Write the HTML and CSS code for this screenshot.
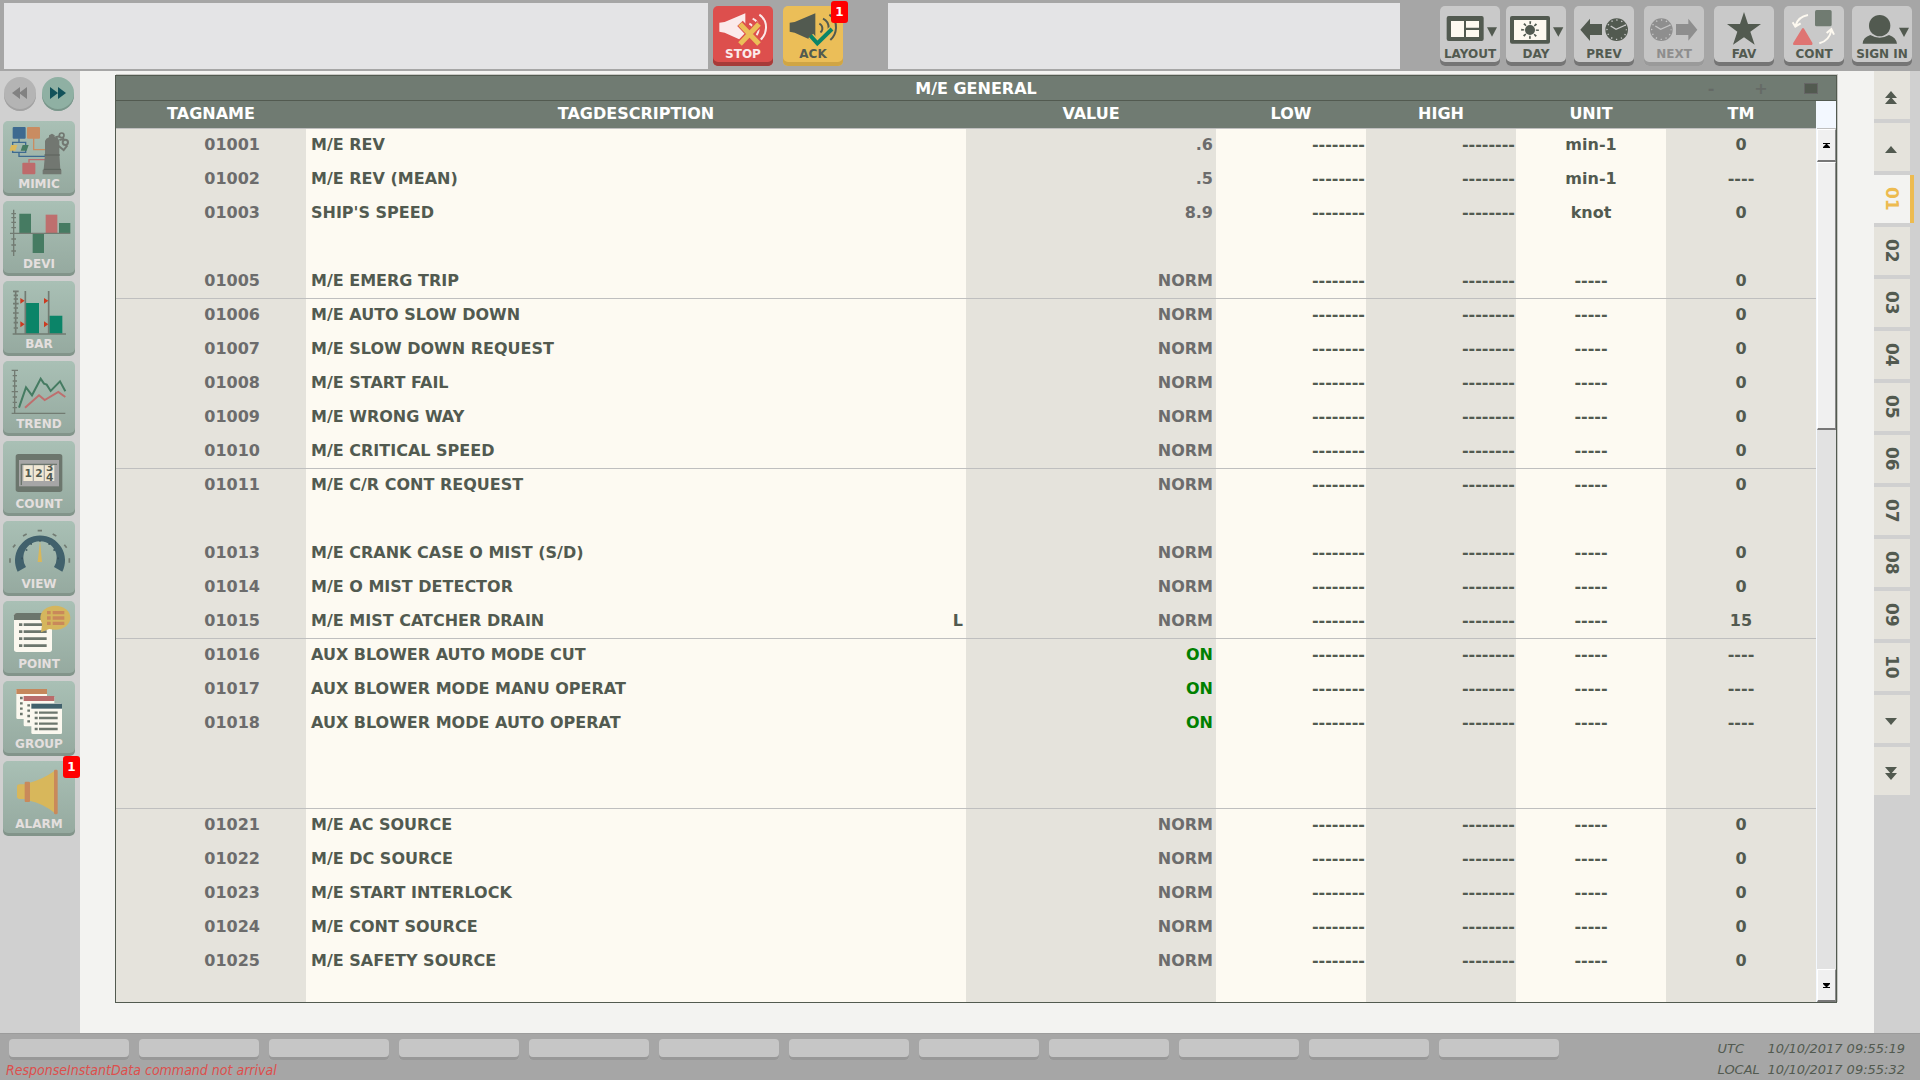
FILE: index.html
```html
<!DOCTYPE html>
<html lang="en">
<head>
    <meta charset="UTF-8">
    <meta name="viewport" content="width=device-width, initial-scale=1.0">
    <title>M/E GENERAL</title>
    <link rel="stylesheet" href="styles.css">
</head>
<body>

<!-- Top bar -->
<header class="topbar">
    <div class="message-box message-left"></div>
    <div class="alarm-buttons">
        <button class="tool stop">
            <svg viewBox="69 18 180 126">
                <path d="M88 68L104 66L166 40V126L104 98L88 95Z" fill="#fbeaea"/>
                <path d="M178 71Q188 75 188 86M188 56Q206 64 206 84Q206 100 196 110M208 44Q229 58 228 84Q227 106 211 120" fill="none" stroke="#fbeaea" stroke-width="6"/>
                <path d="M150 70L209 132M209 70L150 132" stroke="#dd4f4d" stroke-width="23"/>
                <path d="M150 72L207 132M207 72L150 132" stroke="#ebbe58" stroke-width="15"/>
            </svg>
            <span>STOP</span>
        </button>
        <button class="tool ack">
            <svg viewBox="279 18 180 126">
                <path d="M299 68L314 66L376 40V126L314 98L299 95Z" fill="#525a50"/>
                <path d="M388 71Q398 76 397 88Q396 94 391 97M399 56Q416 64 416 84Q416 95 412 102M418 44Q439 58 438 84Q437 106 421 120" fill="none" stroke="#525a50" stroke-width="6"/>
                <path d="M362 108L382 130L425 88" fill="none" stroke="#ebbe58" stroke-width="20"/>
                <path d="M361 107L382 130L426 87" fill="none" stroke="#0b8468" stroke-width="12"/>
            </svg>
            <span>ACK</span>
            <b class="badge">1</b>
        </button>
    </div>
    <div class="message-box message-right"></div>
    <nav class="tools">
        <div class="tool-group tight">
            <button class="tool">
                <svg viewBox="120 18 180 126">
                    <rect x="140" y="48" width="111" height="75" rx="6" fill="#525a50"/>
                    <path d="M153 63H192V111H153ZM198 63H237V83H198ZM198 90H237V111H198Z" fill="#fdf9f0"/>
                    <path d="M261 82H291L276 110Z" fill="#525a50"/>
                </svg>
                <span>LAYOUT</span>
            </button>
            <button class="tool">
                <svg viewBox="318 18 180 126">
                    <rect x="330" y="48" width="120" height="83" rx="6" fill="#525a50"/>
                    <rect x="342" y="60" width="97" height="60" fill="#fdf9f0"/>
                    <circle cx="390" cy="90" r="15" fill="#525a50"/>
                    <circle cx="390" cy="90" r="22" fill="none" stroke="#525a50" stroke-width="9" stroke-dasharray="5 12.28" stroke-dashoffset="2.5"/>
                    <path d="M459 82H490L475 110Z" fill="#525a50"/>
                </svg>
                <span>DAY</span>
            </button>
        </div>
        <div class="tool-group">
            <button class="tool">
                <svg viewBox="522 18 180 126">
                    <path d="M541 89L570 56V72H606V105H570V123Z" fill="#525a50"/>
                    <circle cx="650" cy="89" r="34" fill="#525a50"/>
                    <circle cx="650" cy="89" r="29" fill="none" stroke="#c9c9c9" stroke-width="4" stroke-dasharray="4 11.18" stroke-dashoffset="2"/>
                    <path d="M632 78L648 88L677 75" fill="none" stroke="#c9c9c9" stroke-width="4"/>
                </svg>
                <span>PREV</span>
            </button>
            <button class="tool" disabled>
                <svg viewBox="12 18 180 126">
                    <path d="M172 89L145 56V72H108V105H145V122Z" fill="#8e8e8e"/>
                    <circle cx="64" cy="89" r="34" fill="#8e8e8e"/>
                    <circle cx="64" cy="89" r="29" fill="none" stroke="#c5c5c5" stroke-width="4" stroke-dasharray="4 11.18" stroke-dashoffset="2"/>
                    <path d="M46 78L62 88L91 75" fill="none" stroke="#c5c5c5" stroke-width="4"/>
                </svg>
                <span>NEXT</span>
            </button>
            <button class="tool">
                <svg viewBox="222 18 180 126">
                    <path d="M312 36L324 72H363L331 95L344 134L312 112L279 134L292 95L261 72H300Z" fill="#525a50"/>
                </svg>
                <span>FAV</span>
            </button>
            <button class="tool">
                <svg viewBox="432 18 180 126">
                    <rect x="525" y="30" width="50" height="49" rx="5" fill="#707b71"/>
                    <path d="M489 84Q492 84 494 89L517 128Q519 135 513 135H464Q457 135 460 128L484 89Q486 84 489 84Z" fill="#df7472"/>
                    <path d="M504 45Q474 50 466 78M458 67L466 80L482 70" fill="none" stroke="#fdf9f0" stroke-width="6"/>
                    <path d="M538 130Q568 122 574 91M560 99L574 87L582 104" fill="none" stroke="#fdf9f0" stroke-width="6"/>
                </svg>
                <span>CONT</span>
            </button>
        </div>
        <button class="tool">
            <svg viewBox="636 18 180 126">
                <circle cx="719" cy="77" r="32" fill="#525a50"/>
                <path d="M668 131Q669 112 691 105Q719 121 747 105Q768 112 771 131Z" fill="#525a50"/>
                <path d="M777 83H807L792 111Z" fill="#525a50"/>
            </svg>
            <span>SIGN IN</span>
        </button>
    </nav>
</header>

<div class="main">

    <!-- Left menu -->
    <aside class="sidebar">
        <div class="rounds">
            <button class="round" aria-label="Back" disabled>
                <svg viewBox="0 0 16 12"><path d="M8 0V12L0 6ZM15 0V12L7 6Z"/></svg>
            </button>
            <button class="round" aria-label="Forward">
                <svg viewBox="0 0 16 12"><path d="M0 0V12L8 6ZM8 0V12L16 6Z"/></svg>
            </button>
        </div>
        <button class="menu">
            <svg viewBox="9 183 216 165">
                <path d="M57 235V247M38 256V247H77V256M38 270V277H77V270M57 277V289H136" fill="none" stroke="#3e6a90" stroke-width="4"/>
                <path d="M101 235V269H136" fill="none" stroke="#c98c61" stroke-width="4"/>
                <path d="M87 308V299H136" fill="none" stroke="#be6b6b" stroke-width="4"/>
                <rect x="38" y="201" width="39" height="35" rx="3" fill="#3e6a90"/>
                <rect x="81" y="201" width="39" height="35" rx="3" fill="#c98c61"/>
                <rect x="67" y="308" width="39" height="35" rx="3" fill="#be6b6b"/>
                <path d="M34 255H52L46 272H28Z" fill="#dcb95b"/>
                <path d="M68 255H86L80 272H62Z" fill="#467b62"/>
                <path d="M135 243Q137 235 147 232V226L156 221L164 226V231L174 235L178 243V283L181 329H184V343H128V329H131L135 283Z" fill="#727771"/>
                <path d="M133 285H180M131 328H183" stroke="#5c635c" stroke-width="3"/>
                <circle cx="185" cy="226" r="7" fill="none" stroke="#727771" stroke-width="5"/>
                <circle cx="196" cy="247" r="8" fill="none" stroke="#727771" stroke-width="6"/>
                <path d="M166 232L180 229M178 240L193 236M176 258L191 270L202 256" fill="none" stroke="#727771" stroke-width="6"/>
            </svg>
            <span>MIMIC</span>
        </button>
        <button class="menu">
            <svg viewBox="9 423 216 165">
                <path d="M58 461H93V519H58ZM98 521H132V579H98ZM177 489H211V519H177Z" fill="#467b62"/>
                <rect x="137" y="464" width="35" height="55" fill="#be6f6e"/>
                <path d="M41 449V591M30 520H211M34 461H48M34 473H48M34 487H48M34 503H48M34 537H48M34 555H48M34 573H48" stroke="#727b72" stroke-width="4"/>
            </svg>
            <span>DEVI</span>
        </button>
        <button class="menu">
            <svg viewBox="9 663 216 165">
                <path d="M77 729H117V821H77ZM148 767H187V821H148Z" fill="#0b8468"/>
                <path d="M47 692V822M38 822H198M76 693V822M146 693V822M39 694H56M41 706H54M41 717H54M39 731H56M41 744H54M39 759H56M41 774H54M41 788H54M41 804H54" stroke="#727b72" stroke-width="5"/>
                <path d="M61 714L74 722L61 731ZM61 784L74 793L61 802ZM132 714L145 722L132 731ZM132 784L145 793L132 802Z" fill="#cc3a20"/>
            </svg>
            <span>BAR</span>
        </button>
        <button class="menu">
            <svg viewBox="9 18 216 165">
                <path d="M44 45V174M35 175H196M35 46H54M38 62H51M38 78H51M38 93H51M35 110H54M38 126H51M38 142H51M38 158H51" stroke="#727b72" stroke-width="4"/>
                <path d="M57 158L78 97L96 121L122 71L132 86L140 89L152 108L180 79L196 109" fill="none" stroke="#467b62" stroke-width="6"/>
                <path d="M75 158L117 121L134 135L175 111L196 126" fill="none" stroke="#be6f6e" stroke-width="6"/>
            </svg>
            <span>TREND</span>
        </button>
        <button class="menu">
            <svg viewBox="9 258 216 165">
                <clipPath id="reel"><path d="M135 331H163V378H135Z"/></clipPath>
                <rect x="47" y="297" width="140" height="114" rx="8" fill="#6c766d"/>
                <rect x="57" y="315" width="120" height="79" fill="#a6a6a6"/>
                <path d="M64 390V328H171" fill="none" stroke="#6c766d" stroke-width="4"/>
                <path d="M70 331H98V378H70ZM102 331H131V378H102ZM135 331H163V378H135Z" fill="#f1e8d4"/>
                <g class="digits">
                    <text x="85" y="366">1</text>
                    <text x="117" y="366">2</text>
                    <g clip-path="url(#reel)">
                        <text x="149" y="348">3</text>
                        <text x="149" y="378">4</text>
                    </g>
                </g>
            </svg>
            <span>COUNT</span>
        </button>
        <button class="menu">
            <svg viewBox="9 498 216 165">
                <path d="M53 650A75 75 0 1 1 187 650L162 636A50 50 0 1 0 78 636Z" fill="#41616c"/>
                <path d="M120 558L126 621H113Z" fill="#d8b75b"/>
                <path d="M113 527H126M158 537L169 543M193 569L200 578M208 610V623M30 610V623M39 577L46 569M69 543L80 537" stroke="#727b72" stroke-width="5"/>
                <path d="M64 610H69M172 610H177M77 585H82M160 585H165M91 567H96M145 567H150M118 558H122" stroke="#36505a" stroke-width="5"/>
            </svg>
            <span>VIEW</span>
        </button>
        <button class="menu">
            <svg viewBox="9 33 216 165">
                <rect x="42" y="69" width="114" height="117" rx="8" fill="#fbf8ef"/>
                <path d="M42 90V76Q43 69 50 69H156V90Z" fill="#6c766d"/>
                <path d="M57 104H67M71 104H140M57 125H67M71 125H140M57 146H67M71 146H140M57 167H67M71 167H140" stroke="#6c766d" stroke-width="8"/>
                <ellipse cx="166" cy="83" rx="45" ry="36" fill="#d5b65d"/>
                <path d="M127 98L123 127L153 115Z" fill="#d5b65d"/>
                <path d="M141 68H152M158 68H193M141 84H152M158 84H193M141 100H152M158 100H193" stroke="#c9895a" stroke-width="10"/>
            </svg>
            <span>POINT</span>
        </button>
        <button class="menu">
            <svg viewBox="9 273 216 165">
                <rect x="49" y="297" width="92" height="90" rx="4" fill="#fbf8ef"/>
                <path d="M49 297H141V312H49Z" fill="#c5875c"/>
                <path d="M60 324H68M60 340H68M60 356H68M60 372H68" stroke="#6c766d" stroke-width="7"/>
                <rect x="71" y="318" width="92" height="91" rx="4" fill="#fbf8ef"/>
                <path d="M71 318H163V333H71Z" fill="#b96c6b"/>
                <path d="M82 346H90M82 362H90M82 378H90M82 394H90" stroke="#6c766d" stroke-width="7"/>
                <rect x="94" y="340" width="92" height="92" rx="4" fill="#fbf8ef"/>
                <path d="M94 341H186V356H94Z" fill="#41616c"/>
                <path d="M104 368H113M117 368H173M104 384H113M117 384H173M104 401H113M117 401H173M104 417H113M117 417H173" stroke="#6c766d" stroke-width="7"/>
            </svg>
            <span>GROUP</span>
        </button>
        <button class="menu">
            <svg viewBox="9 513 216 165">
                <path d="M51 590Q51 583 59 583H76V627H59Q51 627 51 619Z" fill="#d8b75b"/>
                <path d="M89 578Q128 568 163 543V668Q128 640 89 632Z" fill="#d8b75b"/>
                <rect x="74" y="575" width="16" height="61" rx="3" fill="#c9895a"/>
                <rect x="162" y="539" width="11" height="134" rx="4" fill="#c9895a"/>
            </svg>
            <span>ALARM</span>
            <b class="badge">1</b>
        </button>
    </aside>

    <!-- Tag list -->
    <main class="content">
        <section class="panel">
            <div class="panel-title">
                <h1>M/E GENERAL</h1>
                <div class="panel-controls">
                    <button aria-label="Zoom out">-</button>
                    <button aria-label="Zoom in">+</button>
                    <button aria-label="Full size"><i class="square"></i></button>
                </div>
            </div>
            <div class="panel-body">
                <table class="tags">
                    <colgroup>
                        <col class="c-tag">
                        <col class="c-desc">
                        <col class="c-value">
                        <col class="c-num">
                        <col class="c-num">
                        <col class="c-num">
                        <col class="c-num">
                    </colgroup>
                    <thead>
                        <tr><th>TAGNAME</th><th>TAGDESCRIPTION</th><th>VALUE</th><th>LOW</th><th>HIGH</th><th>UNIT</th><th>TM</th></tr>
                    </thead>
                    <tbody>
                        <tr><td>01001</td><td>M/E REV</td><td>.6</td><td>--------</td><td>--------</td><td>min-1</td><td>0</td></tr>
                        <tr><td>01002</td><td>M/E REV (MEAN)</td><td>.5</td><td>--------</td><td>--------</td><td>min-1</td><td>----</td></tr>
                        <tr><td>01003</td><td>SHIP'S SPEED</td><td>8.9</td><td>--------</td><td>--------</td><td>knot</td><td>0</td></tr>
                        <tr><td></td><td></td><td></td><td></td><td></td><td></td><td></td></tr>
                        <tr class="line"><td>01005</td><td>M/E EMERG TRIP</td><td>NORM</td><td>--------</td><td>--------</td><td>-----</td><td>0</td></tr>
                        <tr><td>01006</td><td>M/E AUTO SLOW DOWN</td><td>NORM</td><td>--------</td><td>--------</td><td>-----</td><td>0</td></tr>
                        <tr><td>01007</td><td>M/E SLOW DOWN REQUEST</td><td>NORM</td><td>--------</td><td>--------</td><td>-----</td><td>0</td></tr>
                        <tr><td>01008</td><td>M/E START FAIL</td><td>NORM</td><td>--------</td><td>--------</td><td>-----</td><td>0</td></tr>
                        <tr><td>01009</td><td>M/E WRONG WAY</td><td>NORM</td><td>--------</td><td>--------</td><td>-----</td><td>0</td></tr>
                        <tr class="line"><td>01010</td><td>M/E CRITICAL SPEED</td><td>NORM</td><td>--------</td><td>--------</td><td>-----</td><td>0</td></tr>
                        <tr><td>01011</td><td>M/E C/R CONT REQUEST</td><td>NORM</td><td>--------</td><td>--------</td><td>-----</td><td>0</td></tr>
                        <tr><td></td><td></td><td></td><td></td><td></td><td></td><td></td></tr>
                        <tr><td>01013</td><td>M/E CRANK CASE O MIST (S/D)</td><td>NORM</td><td>--------</td><td>--------</td><td>-----</td><td>0</td></tr>
                        <tr><td>01014</td><td>M/E O MIST DETECTOR</td><td>NORM</td><td>--------</td><td>--------</td><td>-----</td><td>0</td></tr>
                        <tr class="line"><td>01015</td><td><div class="flagged"><span>M/E MIST CATCHER DRAIN</span><span>L</span></div></td><td>NORM</td><td>--------</td><td>--------</td><td>-----</td><td>15</td></tr>
                        <tr><td>01016</td><td>AUX BLOWER AUTO MODE CUT</td><td class="on">ON</td><td>--------</td><td>--------</td><td>-----</td><td>----</td></tr>
                        <tr><td>01017</td><td>AUX BLOWER MODE MANU OPERAT</td><td class="on">ON</td><td>--------</td><td>--------</td><td>-----</td><td>----</td></tr>
                        <tr><td>01018</td><td>AUX BLOWER MODE AUTO OPERAT</td><td class="on">ON</td><td>--------</td><td>--------</td><td>-----</td><td>----</td></tr>
                        <tr><td></td><td></td><td></td><td></td><td></td><td></td><td></td></tr>
                        <tr class="line"><td></td><td></td><td></td><td></td><td></td><td></td><td></td></tr>
                        <tr><td>01021</td><td>M/E AC SOURCE</td><td>NORM</td><td>--------</td><td>--------</td><td>-----</td><td>0</td></tr>
                        <tr><td>01022</td><td>M/E DC SOURCE</td><td>NORM</td><td>--------</td><td>--------</td><td>-----</td><td>0</td></tr>
                        <tr><td>01023</td><td>M/E START INTERLOCK</td><td>NORM</td><td>--------</td><td>--------</td><td>-----</td><td>0</td></tr>
                        <tr><td>01024</td><td>M/E CONT SOURCE</td><td>NORM</td><td>--------</td><td>--------</td><td>-----</td><td>0</td></tr>
                        <tr><td>01025</td><td>M/E SAFETY SOURCE</td><td>NORM</td><td>--------</td><td>--------</td><td>-----</td><td>0</td></tr>
                        <tr class="last"><td></td><td></td><td></td><td></td><td></td><td></td><td></td></tr>
                    </tbody>
                </table>
                <div class="scroll">
                    <div class="scroll-head"></div>
                    <button class="scroll-btn" aria-label="Scroll up">
                        <svg viewBox="0 0 7 5"><path d="M0 0H7V1H4L7 4V5H0V4L3 1H0Z"/></svg>
                    </button>
                    <div class="scroll-thumb"></div>
                    <div class="scroll-track"></div>
                    <button class="scroll-btn" aria-label="Scroll down">
                        <svg viewBox="0 0 7 5"><path d="M0 5H7V4H4L7 1V0H0V1L3 4H0Z"/></svg>
                    </button>
                </div>
            </div>
        </section>
    </main>

    <!-- Page tabs -->
    <nav class="pages">
        <button class="page" aria-label="First page"><svg viewBox="0 0 12 14"><path d="M6 0L12 7H0ZM6 6L12 13H0Z"/></svg></button>
        <button class="page" aria-label="Previous page"><svg viewBox="0 0 12 14"><path d="M6 3L12 10H0Z"/></svg></button>
        <button class="page active">01</button>
        <button class="page">02</button>
        <button class="page">03</button>
        <button class="page">04</button>
        <button class="page">05</button>
        <button class="page">06</button>
        <button class="page">07</button>
        <button class="page">08</button>
        <button class="page">09</button>
        <button class="page">10</button>
        <button class="page" aria-label="Next page"><svg viewBox="0 0 12 14"><path d="M6 10L12 3H0Z"/></svg></button>
        <button class="page" aria-label="Last page"><svg viewBox="0 0 12 14"><path d="M6 7L12 0H0ZM6 13L12 6H0Z"/></svg></button>
    </nav>
</div>

<!-- Status bar -->
<footer class="statusbar">
    <div class="status-left">
        <div class="fkeys">
            <button aria-label="F1"></button>
            <button aria-label="F2"></button>
            <button aria-label="F3"></button>
            <button aria-label="F4"></button>
            <button aria-label="F5"></button>
            <button aria-label="F6"></button>
            <button aria-label="F7"></button>
            <button aria-label="F8"></button>
            <button aria-label="F9"></button>
            <button aria-label="F10"></button>
            <button aria-label="F11"></button>
            <button aria-label="F12"></button>
        </div>
        <p class="error">ResponseInstantData command not arrival</p>
    </div>
    <div class="clock">
        <span>UTC</span><span>10/10/2017 09:55:19</span>
        <span>LOCAL</span><span>10/10/2017 09:55:32</span>
    </div>
</footer>

</body>
</html>
```
FILE: styles.css
```css
* {
    box-sizing: border-box;
}

body {
    display: flex;
    flex-direction: column;
    min-height: 100vh;
    margin: 0;
    background-color: #d0d0d0;
    color: #525a50;
    font-family: "DejaVu Sans", "Noto Sans", sans-serif;
    font-size: 16px;
    font-weight: bold;
}

button {
    padding: 0;
    border: 0;
    color: inherit;
    font: inherit;
    cursor: pointer;
}

svg {
    display: block;
}

/* Top bar */
.topbar {
    display: flex;
    height: 71px;
    padding: 3px 8px 0 4px;
    background-color: #a6a6a6;
}

.message-box {
    height: 66px;
    background-color: #e4e4e6;
}

.message-left {
    flex: 704;
}

.message-right {
    flex: 512;
}

.alarm-buttons {
    display: flex;
    gap: 10px;
    margin: 3px 45px 0 5px;
}

.tools {
    display: flex;
    gap: 8px;
    margin: 3px 0 0 40px;
}

.tool-group {
    display: flex;
    gap: 10px;
}

.tool-group.tight {
    gap: 6px;
}

.tool {
    position: relative;
    display: flex;
    flex-direction: column;
    width: 60px;
    height: 60px;
    border-radius: 5px;
    background-color: #c9c9c9;
    box-shadow: inset 0 -4px #757575;
    font-size: 12px;
    line-height: 12px;
    white-space: nowrap;
}

.tool svg {
    width: 60px;
    height: 42px;
}

.tool span,
.menu span {
    align-self: center;
}

.tool:disabled {
    background-color: #c5c5c5;
    box-shadow: inset 0 -4px #9a9a9a;
    color: #8e8e8e;
}

.stop {
    background-color: #dd4f4d;
    box-shadow: inset 0 -4px #a63b39;
    color: #fbeaea;
}

.ack {
    background-color: #ebbe58;
    box-shadow: inset 0 -4px #d0a545;
}

.badge {
    position: absolute;
    top: -5px;
    right: -5px;
    width: 17px;
    border-radius: 3px;
    background-color: #f00;
    color: #fff;
    font-size: 12px;
    line-height: 22px;
    text-align: center;
}

.main {
    display: flex;
    flex: 1;
}

/* Left menu */
.sidebar {
    display: flex;
    flex-direction: column;
    gap: 5px;
    width: 80px;
    padding: 6px 5px 0 3px;
}

.rounds {
    display: flex;
    gap: 6px;
    margin: 0 1px 5px;
}

.round {
    display: flex;
    align-items: center;
    justify-content: center;
    width: 32px;
    height: 34px;
    padding-bottom: 2px;
    border-radius: 16px;
    background-color: #8fb0a3;
    box-shadow: inset 0 -2px #7a968b;
    fill: #12525a;
}

.round:disabled {
    background-color: #b4b4b4;
    box-shadow: inset 0 -2px #a2a2a2;
    fill: #828282;
}

.round svg {
    width: 16px;
    height: 12px;
}

.menu {
    position: relative;
    display: flex;
    flex-direction: column;
    height: 75px;
    border-radius: 5px;
    background-image: linear-gradient(#a9c0b5, #95a99f);
    box-shadow: inset 0 -3px #82948a;
    color: #e4dfde;
    font-size: 12px;
    line-height: 17px;
}

.menu svg {
    width: 72px;
    height: 55px;
}

.digits {
    fill: #525a50;
    font-size: 32px;
    text-anchor: middle;
}

/* Tag list */
.content {
    flex: 1;
    padding: 4px 37px 30px 35px;
    background-color: #f3f3f1;
}

.panel {
    border: 1px solid #525a50;
    box-shadow: 1px -1px #c8c8c4;
}

.panel-title {
    display: grid;
    grid-template-columns: 1fr auto 1fr;
    align-items: center;
    height: 25px;
    border-bottom: 1px solid #525a50;
    background-color: #707b72;
    color: #fff;
}

.panel-title h1 {
    grid-column: 2;
    margin: 0;
    font-size: 16px;
}

.panel-controls {
    display: flex;
    justify-content: flex-end;
    gap: 36px;
    padding-right: 18px;
    color: #656a66;
}

.panel-controls button {
    display: flex;
    align-items: center;
    justify-content: center;
    width: 14px;
    height: 20px;
    background: none;
}

.square {
    width: 14px;
    height: 11px;
    border: 1px solid #666;
    background-color: #525a50;
}

.panel-body {
    display: flex;
}

.tags {
    flex: 1;
    width: 100%;
    table-layout: fixed;
    border-spacing: 0;
    background-color: #fdfaf2;
}

.c-tag {
    width: 190px;
}

.c-value {
    width: 250px;
}

.c-num {
    width: 150px;
}

.c-tag,
.c-value,
.c-num:nth-child(odd) {
    background-color: #e5e3dc;
}

.tags th {
    height: 28px;
    padding: 0 0 2px;
    border-bottom: 1px solid #bfbfbf;
    background-color: #707b72;
    color: #fff;
}

.tags td {
    height: 34px;
    padding: 0 3px 2px 5px;
    line-height: 20px;
}

.tags .line td {
    border-bottom: 1px solid #bfbfbf;
}

.tags .last td {
    height: 23px;
}

.tags td:nth-child(1) {
    padding-right: 46px;
    color: #6c6c6c;
    text-align: right;
}

.tags td:nth-child(3) {
    color: #6c6c6c;
    text-align: right;
}

.tags td:nth-child(4),
.tags td:nth-child(5) {
    padding-right: 1px;
    text-align: right;
}

.tags td:nth-child(6),
.tags td:nth-child(7) {
    padding: 0 0 2px;
    text-align: center;
}

.tags td.on {
    color: #008000;
}

.flagged {
    display: flex;
    justify-content: space-between;
}

.scroll {
    display: flex;
    flex-direction: column;
    width: 20px;
    border-left: 1px solid #f3f8ff;
    background-color: #e2e2e2;
}

.scroll-head {
    height: 28px;
    border-bottom: 1px solid #bfbfbf;
    background-color: #f3f8ff;
}

.scroll-btn,
.scroll-thumb {
    border: 1px solid #fff;
    border-right-color: #8a8a8a;
    border-bottom: 2px solid #777;
    background-color: #f0f0f0;
}

.scroll-btn {
    display: flex;
    align-items: center;
    justify-content: center;
    height: 33px;
}

.scroll-btn svg {
    width: 7px;
    height: 5px;
}

.scroll-thumb {
    height: 268px;
}

.scroll-track {
    flex: 1;
}

/* Page tabs */
.pages {
    display: flex;
    flex-direction: column;
    gap: 4px;
    width: 46px;
}

.page {
    display: flex;
    align-items: center;
    justify-content: center;
    width: 36px;
    height: 48px;
    background-color: #e5e3dc;
    fill: #525a50;
    font-size: 17px;
    writing-mode: vertical-rl;
}

.page svg {
    width: 12px;
    height: 14px;
    margin: 5px 2px 0 0;
}

.page.active {
    width: 40px;
    border-right: 4px solid #edbb50;
    background-color: #f3f3f1;
    color: #edbb50;
}

/* Status bar */
.statusbar {
    display: flex;
    justify-content: space-between;
    height: 47px;
    padding-right: 15px;
    border-top: 1px solid #9c9c9c;
    background-color: #a6a6a6;
    font-style: italic;
    font-weight: normal;
}

.fkeys {
    display: flex;
    gap: 10px;
    padding: 5px 0 0 9px;
}

.fkeys button {
    width: 120px;
    height: 21px;
    border-radius: 4px;
    background-color: #c6c6c6;
    box-shadow: inset 0 -3px #989898;
}

.error {
    margin: 0 0 0 6px;
    color: #dd4f4d;
    font-family: "DejaVu Sans Condensed", "Noto Sans", sans-serif;
    font-size: 14px;
    line-height: 21px;
}

.clock {
    display: grid;
    grid-template-columns: 50px auto;
    align-content: end;
    font-size: 13px;
    line-height: 21px;
}
```
